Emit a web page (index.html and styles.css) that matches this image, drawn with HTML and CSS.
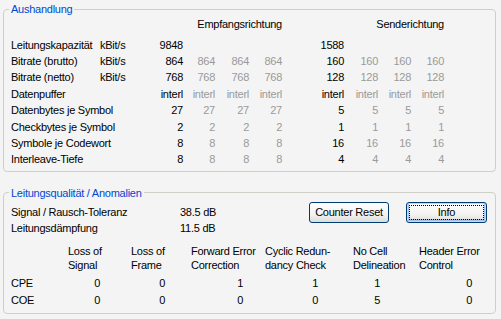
FILE: index.html
```html
<!DOCTYPE html>
<html lang="de">
<head>
  <meta charset="UTF-8" />
  <title>Aushandlung</title>
  <link rel="stylesheet" href="styles.css">
</head>
<body>
  <div class="page">
    <!-- Aushandlung -->
    <fieldset class="group">
      <legend>Aushandlung</legend>
      <div class="neg">
        <div></div><div></div>
        <div class="head">Empfangsrichtung</div>
        <div class="head">Senderichtung</div>

        <div>Leitungskapazität</div><div>kBit/s</div>
        <div class="num">9848</div><div></div><div></div><div></div>
        <div class="num">1588</div><div></div><div></div><div></div>

        <div>Bitrate (brutto)</div><div>kBit/s</div>
        <div class="num">864</div><div class="num dim">864</div><div class="num dim">864</div><div class="num dim">864</div>
        <div class="num">160</div><div class="num dim">160</div><div class="num dim">160</div><div class="num dim">160</div>

        <div>Bitrate (netto)</div><div>kBit/s</div>
        <div class="num">768</div><div class="num dim">768</div><div class="num dim">768</div><div class="num dim">768</div>
        <div class="num">128</div><div class="num dim">128</div><div class="num dim">128</div><div class="num dim">128</div>

        <div>Datenpuffer</div><div></div>
        <div class="num">interl</div><div class="num dim">interl</div><div class="num dim">interl</div><div class="num dim">interl</div>
        <div class="num">interl</div><div class="num dim">interl</div><div class="num dim">interl</div><div class="num dim">interl</div>

        <div>Datenbytes je Symbol</div><div></div>
        <div class="num">27</div><div class="num dim">27</div><div class="num dim">27</div><div class="num dim">27</div>
        <div class="num">5</div><div class="num dim">5</div><div class="num dim">5</div><div class="num dim">5</div>

        <div>Checkbytes je Symbol</div><div></div>
        <div class="num">2</div><div class="num dim">2</div><div class="num dim">2</div><div class="num dim">2</div>
        <div class="num">1</div><div class="num dim">1</div><div class="num dim">1</div><div class="num dim">1</div>

        <div>Symbole je Codewort</div><div></div>
        <div class="num">8</div><div class="num dim">8</div><div class="num dim">8</div><div class="num dim">8</div>
        <div class="num">16</div><div class="num dim">16</div><div class="num dim">16</div><div class="num dim">16</div>

        <div>Interleave-Tiefe</div><div></div>
        <div class="num">8</div><div class="num dim">8</div><div class="num dim">8</div><div class="num dim">8</div>
        <div class="num">4</div><div class="num dim">4</div><div class="num dim">4</div><div class="num dim">4</div>
      </div>
    </fieldset>

    <!-- Leitungsqualität -->
    <fieldset class="group quality">
      <legend>Leitungsqualität / Anomalien</legend>
      <div class="top">
        <div class="line">
          <div>Signal / Rausch-Toleranz</div><div>38.5 dB</div>
          <div>Leitungsdämpfung</div><div>11.5 dB</div>
        </div>
        <div class="buttons">
          <button class="btn">Counter Reset</button>
          <button class="btn default">Info</button>
        </div>
      </div>
      <div class="anom">
        <div></div>
        <div class="ah">Loss of<br>Signal</div>
        <div class="ah">Loss of<br>Frame</div>
        <div class="ah">Forward Error<br>Correction</div>
        <div class="ah">Cyclic Redun-<br>dancy Check</div>
        <div class="ah">No Cell<br>Delineation</div>
        <div class="ah">Header Error<br>Control</div>

        <div>CPE</div>
        <div class="val">0</div><div class="val">0</div><div class="val">1</div>
        <div class="val">1</div><div class="val">1</div><div class="val">0</div>

        <div>COE</div>
        <div class="val">0</div><div class="val">0</div><div class="val">0</div>
        <div class="val">0</div><div class="val">5</div><div class="val">0</div>
      </div>
    </fieldset>
  </div>
</body>
</html>
```

FILE: styles.css
```css
* { box-sizing: border-box; }
body {
  margin: 0;
  background: #f4f4f4;
  font-family: "Liberation Sans", Arial, sans-serif;
  font-size: 11px;
  letter-spacing: -0.25px;
  color: #000;
}

.page { padding: 0 5px 0 3px; }

/* Gruppenrahmen */
.group {
  margin: 3px 0 0;
  padding: 0 7px 3px;
  border: 1px solid #cfcfc8;
  border-radius: 4px;
}
.group legend {
  margin-left: -2px;
  padding: 0 2px;
  line-height: 12px;
  color: #0046d5;
}
.quality { margin-top: 15px; padding-bottom: 4px; }

/* Aushandlung Tabelle */
.neg {
  display: grid;
  grid-template-columns: 89px 50px 33px 32px 34px 33px 62px 34px 33px 33px;
  grid-template-rows: 21.5px;
  grid-auto-rows: 16.4px;
  align-items: center;
  line-height: 14px;
  white-space: nowrap;
}
.neg .head {
  grid-column: span 4;
  align-self: start;
  line-height: 16px;
  padding-top: 1px;
  text-align: right;
}
.num { text-align: right; }
.dim { color: #9a9a9a; }

/* Leitungsqualität */
.top {
  display: flex;
  align-items: flex-start;
  margin-top: 3px;
}
.line {
  display: grid;
  grid-template-columns: 169px 60px;
  grid-auto-rows: 16px;
  align-items: center;
  margin-top: 2px;
}
.buttons {
  display: flex;
  gap: 17px;
  margin-left: auto;
  margin-right: 1px;
}
.btn {
  width: 80px;
  height: 21px;
  padding: 0;
  font: inherit;
  letter-spacing: inherit;
  color: #000;
  border: 1px solid #003c74;
  border-radius: 3px;
  background: linear-gradient(#ffffff, #f2f2f0 60%, #dcdcd8);
}
.btn.default {
  width: 81px;
  box-shadow: inset 0 0 0 1px #c6d6f2, inset 0 -1px 0 2px #a9c0ea;
  outline: 1px dotted #000;
  outline-offset: -4px;
}

.anom {
  display: grid;
  grid-template-columns: 57px 63px 60px 74px 88px 66px 68px;
  grid-template-rows: 31px 17px 17px;
  align-items: center;
  margin-top: 8px;
  line-height: 14px;
  white-space: nowrap;
}
.ah { align-self: start; }
.val { text-align: right; }
.val:nth-child(7n+2) { padding-right: 31px; }
.val:nth-child(7n+3) { padding-right: 26px; }
.val:nth-child(7n+4) { padding-right: 22px; }
.val:nth-child(7n+5) { padding-right: 35px; }
.val:nth-child(7n+6) { padding-right: 39px; }
.val:nth-child(7n) { padding-right: 15px; }
```
